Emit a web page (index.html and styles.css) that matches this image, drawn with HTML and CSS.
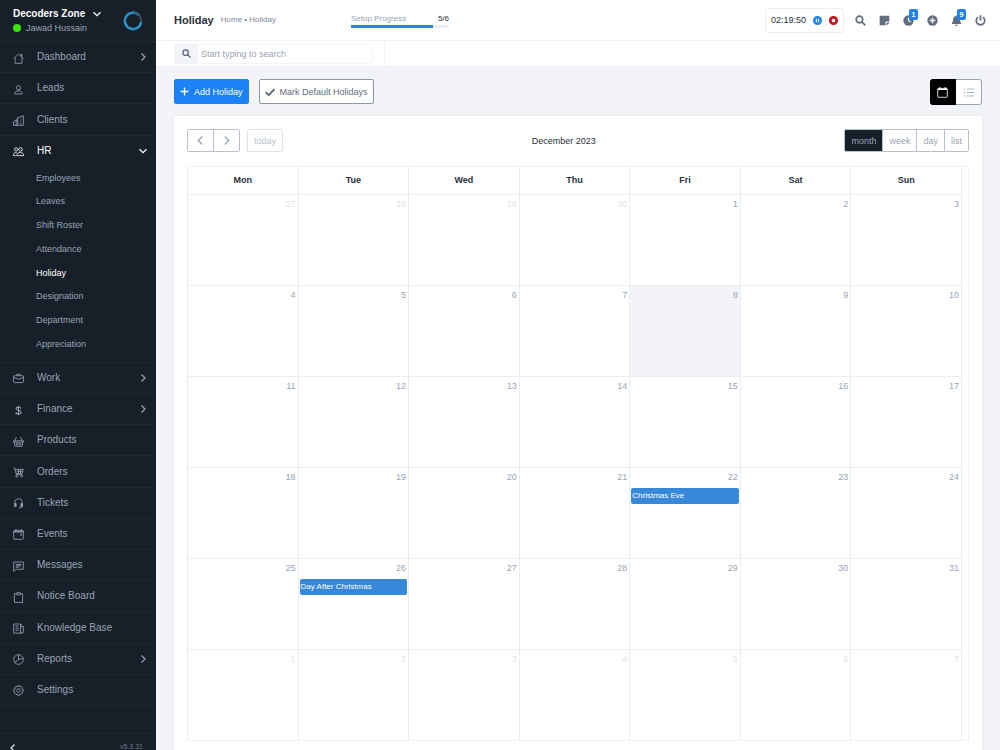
FILE: index.html
```html
<!DOCTYPE html>
<html lang="en">
<head>
<meta charset="utf-8">
<title>Holiday</title>
<link rel="stylesheet" href="styles.css">
</head>
<body>
<svg class="defs" aria-hidden="true">
  <symbol id="chev-right" viewBox="0 0 16 16"><path d="M5 1l7 7-7 7"/></symbol>
  <symbol id="chev-left" viewBox="0 0 16 16"><path d="M11 1L4 8l7 7"/></symbol>
  <symbol id="chev-down" viewBox="0 0 16 16"><path d="M1 4.500l7 7 7-7"/></symbol>
  <symbol id="search" viewBox="0 0 16 16"><circle cx="6.500" cy="6.500" r="4.800"/><path d="M10 10l5 5"/></symbol>
</svg>
<div class="app">
  <aside class="sidebar">
    <header class="account">
      <div class="account-text">
        <button class="company" type="button">Decoders Zone <svg class="line chev"><use href="#chev-down"/></svg></button>
        <div class="user"><span class="online"></span>Jawad Hussain</div>
      </div>
      <svg class="logo" viewBox="0 0 20 20"><path d="M16 4.200A8.200 8.200 0 1 0 18.200 11" fill="none" stroke="#2b8fc4" stroke-width="2.600"/><path d="M11 1.600a8.400 8.400 0 0 1 7.200 9.400" fill="none" stroke="#3b5668" stroke-width="1.600"/></svg>
    </header>
    <ul class="menu">
      <li><a href="#"><svg class="line" viewBox="0 0 16 16"><path d="M1 8l7-6.500 7 6.500M3 7v8h10V7M11.500 4.500v-2.500h1.500v4"/></svg><span>Dashboard</span><svg class="line chev"><use href="#chev-right"/></svg></a></li>
      <li><a href="#"><svg class="line" viewBox="0 0 16 16"><circle cx="8" cy="5.500" r="3"/><path d="M2.500 14.500c0-3 2-4.500 5.500-4.500s5.500 1.500 5.500 4.500z"/></svg><span>Leads</span></a></li>
      <li><a href="#"><svg class="line" viewBox="0 0 16 16"><path d="M.7 15V9.500L6 7v8M6 15V4.500L15 1v14H.7M3.500 10.500v1M3.500 13v1M8.500 6.500v1M8.500 9v1M8.500 11.500v1M11.500 5v1M11.500 8v1M11.500 11v3"/></svg><span>Clients</span></a></li>
      <li class="open"><a href="#"><svg class="line" viewBox="0 0 16 16"><circle cx="4.500" cy="5" r="2.300"/><circle cx="11" cy="5" r="2.600"/><path d="M5.500 14c0-3 2-4.500 5-4.500s5 1.500 5 4.500zM5.500 9.500C2.500 9 .5 11 .5 14H4"/></svg><span>HR</span><svg class="line chev"><use href="#chev-down"/></svg></a></li>
      <li class="sub-wrap">
        <ul class="sub">
          <li><a href="#">Employees</a></li>
          <li><a href="#">Leaves</a></li>
          <li><a href="#">Shift Roster</a></li>
          <li><a href="#">Attendance</a></li>
          <li><a href="#" class="current">Holiday</a></li>
          <li><a href="#">Designation</a></li>
          <li><a href="#">Department</a></li>
          <li><a href="#">Appreciation</a></li>
        </ul>
      </li>
      <li><a href="#"><svg class="line" viewBox="0 0 16 16"><rect x=".7" y="4" width="14.600" height="10" rx="1.500"/><path d="M5.500 4V2h5v2M1 6.500l7 2.500 7-2.500"/></svg><span>Work</span><svg class="line chev"><use href="#chev-right"/></svg></a></li>
      <li><a href="#"><svg class="line" viewBox="0 0 16 16"><path d="M11.500 5.500C11.300 3.800 10 3 8 3S4.500 4 4.500 5.500C4.500 9 11.800 7 11.800 10.500c0 1.500-1.500 2.500-3.800 2.500s-3.700-1-3.900-2.700M8 1v14" stroke-width="1.500"/></svg><span>Finance</span><svg class="line chev"><use href="#chev-right"/></svg></a></li>
      <li><a href="#"><svg class="line" viewBox="0 0 16 16"><path d="M5 1.500L2.500 7M11 1.500L13.500 7M.7 7h14.600v2H.7zM2 9l.8 6h10.400l.8-6M5 10.500v3M7 10.500v3M9 10.500v3M11 10.500v3"/></svg><span>Products</span></a></li>
      <li><a href="#"><svg class="line" viewBox="0 0 16 16"><path d="M.5 1.500h2L5 11h8.500M3 3.500h12l-1.500 5.500-9 .5M5.500 6.300h8.500M8 4v5M11 4v5"/><circle cx="5.500" cy="13.300" r="1.500"/><circle cx="12.500" cy="13.300" r="1.500"/></svg><span>Orders</span></a></li>
      <li><a href="#"><svg class="line" viewBox="0 0 16 16"><path d="M2.500 9V6.500a5.500 5.500 0 0 1 11 0V12c0 1.500-1 2.200-2.500 2.200H8.500"/><path d="M2.500 8h2v4.500h-2zM11.500 8h2v4.500h-2z" fill="currentColor"/></svg><span>Tickets</span></a></li>
      <li><a href="#"><svg class="line" viewBox="0 0 16 16"><rect x="1" y="2" width="14" height="13" rx="1"/><path d="M1 3.500h14M1 4.500h14M4 .5v2M12 .5v2M11 7.500h1.500v1.500H11z"/></svg><span>Events</span></a></li>
      <li><a href="#"><svg class="line" viewBox="0 0 16 16"><path d="M1 1.500h14v10.500H4.500L1 15zM4 5h8M4 7h8M4 9h5"/></svg><span>Messages</span></a></li>
      <li><a href="#"><svg class="line" viewBox="0 0 16 16"><path d="M5.500 2.500H2v12.700h12V2.500h-3.500M5.500 1h5v3h-5z"/></svg><span>Notice Board</span></a></li>
      <li><a href="#"><svg class="line" viewBox="0 0 16 16"><path d="M1 1.500h10V13c0 1 .7 1.700 2 1.700H1zM11 5.500h4V13c0 1-.7 1.700-2 1.700M11 1.500l4 4M3.500 4.500h4M3.500 7.500h5M3.500 10.500h5"/></svg><span>Knowledge Base</span></a></li>
      <li><a href="#"><svg class="line" viewBox="0 0 16 16"><circle cx="8" cy="8" r="7"/><path d="M8 1v7l-5.500 4.500M8 8l7-1.500"/></svg><span>Reports</span><svg class="line chev"><use href="#chev-right"/></svg></a></li>
      <li><a href="#"><svg class="line" viewBox="0 0 16 16"><path d="M6.700 1h2.600l.6 1.800 1.800-.8 1.900 1.900-.8 1.800 2.200.9v2.800l-2.200.9.8 1.800-1.900 1.900-1.800-.8-.6 1.800H6.700l-.6-1.800-1.800.8-1.900-1.900.8-1.800L1 9.400V6.600l2.200-.9-.8-1.800L4.300 2l1.800.8z"/><circle cx="8" cy="8" r="2.600"/></svg><span>Settings</span></a></li>
    </ul>
    <footer class="side-foot">
      <button type="button" aria-label="Collapse menu"><svg class="line chev"><use href="#chev-left"/></svg></button>
      <span>v5.3.31</span>
    </footer>
  </aside>

  <div class="page">
    <header class="topbar">
      <div class="heading"><h1>Holiday</h1><p><a href="#">Home</a> • Holiday</p></div>
      <div class="progress">
        <div class="progress-text"><span>Setup Progress</span><b>5/6</b></div>
        <div class="track"><div class="fill"></div></div>
      </div>
      <div class="tools">
        <div class="timer"><span>02:19:50</span>
          <button type="button" aria-label="Pause"><svg viewBox="0 0 16 16"><circle cx="8" cy="8" r="8" fill="#1d82f5"/><path d="M5 5h2v6H5zM9 5h2v6H9z" fill="#fff"/></svg></button>
          <i></i>
          <button type="button" aria-label="Stop"><svg viewBox="0 0 16 16"><circle cx="8" cy="8" r="8" fill="#c70b17"/><path d="M5 5h6v6H5z" fill="#fff"/></svg></button>
        </div>
        <button class="tool" type="button" aria-label="Search"><svg class="line heavy"><use href="#search"/></svg></button>
        <button class="tool" type="button" aria-label="Notes"><svg viewBox="0 0 16 16"><path d="M1 1h14v8.500H9.500V15H1zM15 11v.5L11.500 15H11v-4z" fill="currentColor"/></svg></button>
        <button class="tool" type="button" aria-label="Time logs"><svg viewBox="0 0 16 16"><circle cx="8" cy="8" r="7.500" fill="currentColor"/><path d="M8 3.500V8l3 2.200" fill="none" stroke="#fff" stroke-width="1.600"/></svg><em>1</em></button>
        <button class="tool" type="button" aria-label="Add"><svg viewBox="0 0 16 16"><circle cx="8" cy="8" r="7.500" fill="currentColor"/><path d="M8 4v8M4 8h8" stroke="#fff" stroke-width="2"/></svg></button>
        <button class="tool" type="button" aria-label="Notifications"><svg viewBox="0 0 16 16"><path d="M8 .5c.7 0 1 .5 1 1.100 2.500.5 4 2.400 4 5 0 3 .8 4.200 1.800 5.200.5.600.1 1.200-.6 1.200H1.800c-.7 0-1.100-.6-.6-1.200C2.200 10.800 3 9.600 3 6.600c0-2.600 1.500-4.500 4-5C7 1 7.300.5 8 .5zM6 14h4a2 2 0 0 1-4 0z" fill="currentColor"/></svg><em>9</em></button>
        <button class="tool" type="button" aria-label="Log out"><svg class="line heavy" viewBox="0 0 16 16"><path d="M8 .5V8M4.500 3a6.200 6.200 0 1 0 7 0"/></svg></button>
      </div>
    </header>

    <div class="searchbar">
      <div class="searchbox">
        <label for="q" aria-label="Search"><svg class="line heavy"><use href="#search"/></svg></label>
        <input id="q" type="text" placeholder="Start typing to search">
      </div>
    </div>

    <main>
      <div class="actions">
        <button class="btn primary" type="button"><svg class="line heavy" viewBox="0 0 16 16"><path d="M8 1v14M1 8h14"/></svg>Add Holiday</button>
        <button class="btn" type="button"><svg class="line bold" viewBox="0 0 16 16"><path d="M1 8.500l5 4.500L15 3.500"/></svg>Mark Default Holidays</button>
        <div class="views">
          <button class="on" type="button" aria-label="Calendar view"><svg class="line" viewBox="0 0 16 16"><rect x="1" y="2" width="14" height="13" rx="1.500"/><path d="M1 3.500h14M4 .5v2M12 .5v2" stroke-width="2"/></svg></button>
          <button type="button" aria-label="List view"><svg class="line" viewBox="0 0 16 16"><path d="M5.500 3H16M5.500 8H16M5.500 13H16M1 3h2M1 8h2M1 13h2"/></svg></button>
        </div>
      </div>

      <section class="card">
        <div class="cal-bar">
          <div class="left">
            <div class="group nav"><button type="button" aria-label="Previous"><svg class="line chev"><use href="#chev-left"/></svg></button><button type="button" aria-label="Next"><svg class="line chev"><use href="#chev-right"/></svg></button></div>
            <div class="group faded"><button type="button" disabled>today</button></div>
          </div>
          <h2>December 2023</h2>
          <div class="group"><button class="on" type="button">month</button><button type="button">week</button><button type="button">day</button><button type="button">list</button></div>
        </div>
        <div class="cal">
          <table>
            <thead><tr><th>Mon</th><th>Tue</th><th>Wed</th><th>Thu</th><th>Fri</th><th>Sat</th><th>Sun</th></tr></thead>
            <tbody>
              <tr><td class="out">27</td><td class="out">28</td><td class="out">29</td><td class="out">30</td><td>1</td><td>2</td><td>3</td></tr>
              <tr><td>4</td><td>5</td><td>6</td><td>7</td><td class="today">8</td><td>9</td><td>10</td></tr>
              <tr><td>11</td><td>12</td><td>13</td><td>14</td><td>15</td><td>16</td><td>17</td></tr>
              <tr><td>18</td><td>19</td><td>20</td><td>21</td><td>22<a class="event" href="#">Christmas Eve</a></td><td>23</td><td>24</td></tr>
              <tr><td>25</td><td>26<a class="event" href="#">Day After Christmas</a></td><td>27</td><td>28</td><td>29</td><td>30</td><td>31</td></tr>
              <tr><td class="out">1</td><td class="out">2</td><td class="out">3</td><td class="out">4</td><td class="out">5</td><td class="out">6</td><td class="out">7</td></tr>
            </tbody>
          </table>
        </div>
      </section>
    </main>
  </div>
</div>
</body>
</html>
```

FILE: styles.css
```css
* { box-sizing: border-box; }
body, h1, h2, p, ul { margin: 0; padding: 0; }
body {
  font: 9px/12px "Liberation Sans", Arial, sans-serif;
  color: #616e80;
  background: #f2f4f7;
}
ul { list-style: none; }
a { color: inherit; text-decoration: none; }
button {
  font: inherit;
  color: inherit;
  background: none;
  border: 0;
  padding: 0;
}
svg { display: block; flex: none; width: 12px; height: 12px; }
.defs { position: absolute; width: 0; height: 0; }
.line { fill: none; stroke: currentColor; stroke-width: 1.2; }
.heavy { stroke-width: 2.4; }
.bold { stroke-width: 3.2; }
.chev { width: 8px; height: 8px; stroke-width: 2.4; }

.app { display: flex; height: 100vh; overflow: hidden; }

/* Sidebar */
.sidebar {
  flex: none;
  width: 156px;
  display: flex;
  flex-direction: column;
  background: #171f29;
  color: #99a5b5;
}
.account {
  flex: none;
  height: 41px;
  display: flex;
  justify-content: space-between;
  align-items: center;
  padding: 0 13px;
}
.company {
  display: flex;
  align-items: center;
  gap: 8px;
  font-size: 10px;
  font-weight: bold;
  line-height: 14px;
  color: #fff;
}
.user { display: flex; align-items: center; gap: 5px; line-height: 14px; }
.online { width: 8px; height: 8px; border-radius: 50%; background: #3be30d; }
.logo { width: 20px; height: 20px; }
.menu { flex: 1; display: flex; flex-direction: column; border-bottom: 1px solid #202933; }
.menu > li { flex: 1 0 auto; min-height: 31px; display: flex; border-top: 1px solid #202933; }
.menu > li > a {
  flex: 1;
  display: flex;
  align-items: center;
  gap: 13px;
  padding: 0 9px 0 13px;
  font-size: 10px;
}
.menu > li > a > svg:first-child { width: 11px; height: 11px; margin-top: 2px; }
.menu span { flex: 1; }
.menu > .open { color: #fff; }
.menu > .sub-wrap { flex: none; border: 0; }
.sub { flex: 1; min-height: 196px; display: grid; padding: 0 0 6px 36px; align-items: center; }
.current { color: #fff; }
.side-foot {
  flex: none;
  height: 17px;
  margin-top: 27px;
  padding: 8px 13px 0 9px;
  display: flex;
  justify-content: space-between;
  border-top: 1px solid #202933;
  font-size: 7px;
  line-height: 10px;
  overflow: hidden;
  color: #6d7886;
}
.side-foot svg { margin-top: 2px; }
.side-foot button { align-self: flex-start; color: #e6eaef; }

/* Top bars */
.page { flex: 1; min-width: 0; display: flex; flex-direction: column; }
.topbar {
  flex: none;
  height: 41px;
  display: flex;
  align-items: center;
  padding: 0 8px 0 18px;
  background: #fff;
  border-bottom: 1px solid #eef1f5;
}
.heading { flex: none; width: 177px; display: flex; align-items: center; gap: 7px; }
h1 { font-size: 11px; line-height: 14px; color: #28313c; }
.heading p { font-size: 8px; color: #7d8896; }
.progress { width: 98px; font-size: 8px; color: #99a5b5; }
.progress-text { display: flex; justify-content: space-between; line-height: 11px; margin-bottom: 1px; }
.progress b { font-weight: normal; color: #28313c; }
.track { height: 3px; background: #e8eef3; }
.fill { width: 84%; height: 3px; background: #2f80e4; }
.tools { margin-left: auto; display: flex; align-items: center; }
.timer {
  display: flex;
  align-items: center;
  gap: 3px;
  height: 25px;
  margin-right: 4px;
  padding: 0 5px;
  border: 1px solid #e8eef3;
  border-radius: 3px;
  color: #28313c;
}
.timer span { margin-right: 4px; }
.timer svg { width: 9px; height: 9px; }
.timer i { width: 1px; height: 11px; background: #e8eef3; }
.tool { position: relative; width: 24px; height: 24px; display: grid; place-items: center; }
.tool svg { width: 11px; height: 11px; }
.tool em {
  position: absolute;
  left: 13px;
  top: 1px;
  padding: 0 2px;
  border-radius: 2px;
  background: #1d82f5;
  color: #fff;
  font: bold 7px/11px "Liberation Sans", Arial, sans-serif;
  min-width: 9px;
  text-align: center;
}
.searchbar {
  flex: none;
  height: 26px;
  display: flex;
  padding-left: 18px;
  background: #fff;
  border-bottom: 1px solid #e8eef3;
}
.searchbox {
  display: flex;
  align-items: center;
  width: 211px;
  padding-right: 11px;
  border-right: 1px solid #eef1f5;
}
.searchbox label { flex: none; width: 24px; height: 20px; display: grid; place-items: center; background: #f2f4f7; border-radius: 2px 0 0 2px; }
.searchbox label svg { width: 9px; height: 9px; }
.searchbox input {
  flex: 1;
  min-width: 0;
  height: 20px;
  padding: 0 3px;
  border: 1px solid #f2f4f7;
  border-left: 0;
  border-radius: 0 3px 3px 0;
  font: inherit;
  background: #fff;
}
.searchbox input::placeholder { color: #99a5b5; }

/* Content */
main { flex: 1; min-height: 0; padding: 12px 18px; }
.actions { display: flex; align-items: flex-start; gap: 10px; margin-bottom: 11px; }
.btn {
  display: flex;
  align-items: center;
  gap: 5px;
  height: 25px;
  padding: 0 5px;
  border: 1px solid #8c97a5;
  border-radius: 2px;
  background: #fff;
}
.btn svg { width: 10px; height: 10px; }
.primary { background: #1d82f5; border-color: #1d82f5; color: #fff; }
.primary svg { width: 9px; height: 9px; }
.views { margin-left: auto; display: flex; border-radius: 3px; background: #fff; }
.views button { width: 26px; height: 26px; display: grid; place-items: center; color: #99a5b5; border: 1px solid #99a5b5; border-left: 0; border-radius: 0 3px 3px 0; }
.views svg { width: 11px; height: 11px; }
.views .on { background: #000; color: #fff; border-color: #000; border-radius: 3px 0 0 3px; }
.card { padding: 13px; background: #fff; border-radius: 3px; box-shadow: 0 0 3px #dfe4ec; }
.cal-bar { display: flex; justify-content: space-between; align-items: center; margin-bottom: 14px; }
.left { display: flex; gap: 7px; }
h2 { font-size: 9px; font-weight: normal; color: #28313c; }
.group { display: flex; border: 1px solid #b9c2cc; border-radius: 2px; color: #99a5b5; overflow: hidden; }
.group button { height: 21px; padding: 0 6px; }
.group button + button { border-left: 1px solid #b9c2cc; }
.group .on { background: #171f29; }
.nav button { width: 25px; display: grid; place-items: center; }
.nav button + button { width: 26px; }
.nav .chev { width: 9px; height: 9px; }
.faded { border-color: #dce1e6; color: #b9c2cc; }
.cal { padding-right: 6px; border: 1px solid #eef1f5; border-left: 0; }
table { width: 100%; border-collapse: collapse; table-layout: fixed; }
th, td { border: 1px solid #e8eef3; padding: 3px 2px; }
thead tr { height: 27px; }
tbody tr { height: 91px; }
thead th { border-top: 0; }
tr:last-child td { border-bottom: 0; }
th { color: #28313c; text-align: center; }
td { text-align: right; vertical-align: top; color: #99a5b5; }
.out { color: #dfe3e8; }
.today { background: #f2f4f7; }
.event {
  display: block;
  margin: 5px -1px 0;
  padding: 0 1px;
  border-radius: 2px;
  background: #3788d8;
  color: #fff;
  font-size: 8px;
  line-height: 16px;
  text-align: left;
}
```
